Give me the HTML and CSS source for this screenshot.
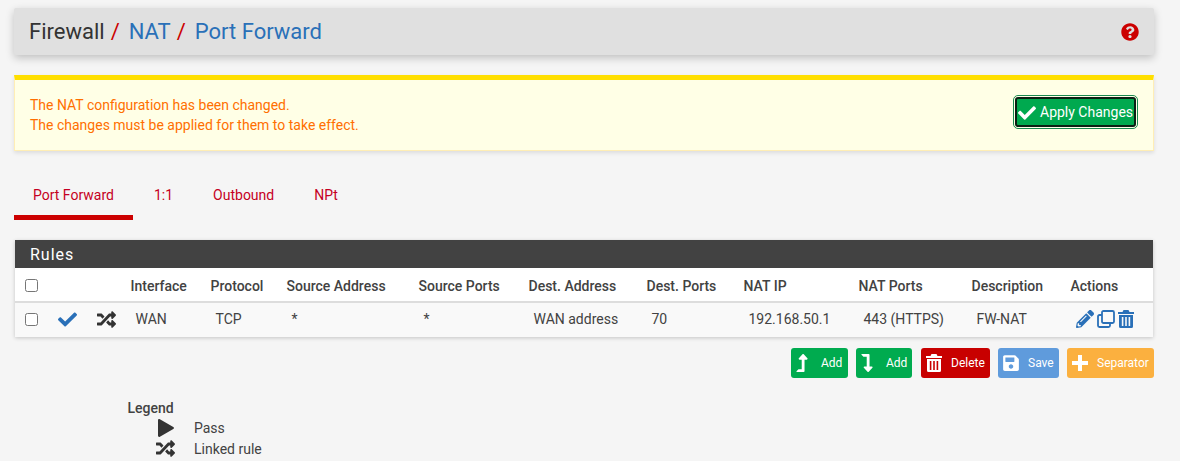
FILE: index.html
```html
<!DOCTYPE html>
<html lang="en">
<head>
<meta charset="utf-8">
<title>Firewall / NAT / Port Forward</title>
<link rel="stylesheet" href="styles.css">
</head>
<body>
<svg class="defs" width="0" height="0" aria-hidden="true">
  <symbol id="i-random" viewBox="0 0 512 512"><path d="M504.971 359.029c9.373 9.373 9.373 24.569 0 33.941l-80 79.984c-15.01 15.01-40.971 4.49-40.971-16.971V416h-58.785a12.004 12.004 0 0 1-8.773-3.812l-70.556-75.596 53.333-57.143L352 336h32v-39.981c0-21.438 25.943-31.998 40.971-16.971l80 79.981zM12 176h84l52.781 56.551 53.333-57.143-70.556-75.596A11.999 11.999 0 0 0 122.785 96H12c-6.627 0-12 5.373-12 12v56c0 6.627 5.373 12 12 12zm372 0v39.984c0 21.46 25.961 31.98 40.971 16.971l80-79.984c9.373-9.373 9.373-24.569 0-33.941l-80-79.981C409.943 24.021 384 34.582 384 56.019V96h-58.785a12.004 12.004 0 0 0-8.773 3.812L96 336H12c-6.627 0-12 5.373-12 12v56c0 6.627 5.373 12 12 12h110.785c3.326 0 6.503-1.381 8.773-3.812L352 176h32z"/></symbol>
  <symbol id="i-check" viewBox="0 0 512 512"><path d="M173.898 439.404l-166.4-166.4c-9.997-9.997-9.997-26.206 0-36.204l36.203-36.204c9.997-9.998 26.207-9.998 36.204 0L192 312.69 432.095 72.596c9.997-9.997 26.207-9.997 36.204 0l36.203 36.204c9.997 9.997 9.997 26.206 0 36.204l-294.4 294.401c-9.998 9.997-26.207 9.997-36.204-.001z"/></symbol>
  <symbol id="i-trash" viewBox="0 0 16 18"><path fill-rule="evenodd" d="M5.5 0h5l1 2H16v2H0V2h4.500zM1 5h14v11.500a1.500 1.500 0 0 1-1.500 1.500h-11A1.500 1.500 0 0 1 1 16.500zM3.800 7v9h1.600V7zm3.400 0v9h1.600V7zm3.400 0v9h1.600V7z"/></symbol>
</svg>
<div class="page">
  <header class="page-header">
    <h2 class="crumbs">
      <span>Firewall</span><i class="sep">/</i>
      <a href="#">NAT</a><i class="sep">/</i>
      <a href="#">Port Forward</a>
    </h2>
    <svg class="help" viewBox="0 0 512 512"><path d="M504 256c0 136.997-111.043 248-248 248S8 392.997 8 256C8 119.083 119.043 8 256 8s248 111.083 248 248zM262.655 90c-54.497 0-89.255 22.957-116.549 63.758-3.536 5.286-2.353 12.415 2.715 16.258l34.699 26.31c5.205 3.947 12.621 3.008 16.665-2.122 17.864-22.658 30.113-35.797 57.303-35.797 20.429 0 45.698 13.148 45.698 32.958 0 14.976-12.363 22.667-32.534 33.976C247.128 238.528 216 254.941 216 296v4c0 6.627 5.373 12 12 12h56c6.627 0 12-5.373 12-12v-1.333c0-28.462 83.186-29.647 83.186-106.667 0-58.002-60.165-102-116.531-102zM256 338c-25.365 0-46 20.635-46 46 0 25.364 20.635 46 46 46s46-20.636 46-46c0-25.365-20.635-46-46-46z"/></svg>
  </header>

  <section class="alert">
    <p class="alert-text">The NAT configuration has been changed.<br>The changes must be applied for them to take effect.</p>
    <button class="apply"><svg class="apply-icon"><use href="#i-check"/></svg>Apply Changes</button>
  </section>

  <nav class="tabs">
    <a class="tab active" href="#">Port Forward</a>
    <a class="tab" href="#">1:1</a>
    <a class="tab" href="#">Outbound</a>
    <a class="tab" href="#">NPt</a>
  </nav>

  <section class="panel">
    <h3 class="panel-title">Rules</h3>
    <div class="row head">
      <span class="cell"><span class="box"></span></span>
      <span></span><span></span>
      <span>Interface</span><span>Protocol</span><span>Source Address</span><span>Source Ports</span>
      <span>Dest. Address</span><span>Dest. Ports</span><span>NAT IP</span><span>NAT Ports</span>
      <span>Description</span><span>Actions</span>
    </div>
    <div class="row body">
      <span class="cell"><span class="box"></span></span>
      <span class="cell"><svg class="ico-check"><use href="#i-check"/></svg></span>
      <span class="cell"><svg class="ico-random"><use href="#i-random"/></svg></span>
      <span class="td">WAN</span><span class="td">TCP</span><span class="td">*</span><span class="td">*</span>
      <span class="td">WAN address</span><span class="td">70</span><span class="td">192.168.50.1</span><span class="td">443 (HTTPS)</span>
      <span class="td">FW-NAT</span>
      <span class="actions">
        <svg class="act pencil" viewBox="0 0 512 512"><path d="M497.9 142.1l-46.1 46.1c-4.7 4.700-12.300 4.700-17 0l-111-111c-4.700-4.700-4.700-12.300 0-17l46.100-46.100c18.700-18.700 49.100-18.700 67.900 0l60.100 60.100c18.800 18.700 18.800 49.100 0 67.900zM284.200 99.800L21.600 362.400.4 483.900c-2.900 16.400 11.400 30.600 27.800 27.800l121.500-21.300 262.600-262.600c4.700-4.700 4.700-12.300 0-17l-111-111c-4.800-4.700-12.400-4.700-17.100 0zM124.100 339.900c-5.500-5.500-5.500-14.300 0-19.800l154-154c5.500-5.500 14.300-5.500 19.800 0s5.500 14.300 0 19.800l-154 154c-5.500 5.500-14.300 5.500-19.800 0zM88 424h48v36.300l-64.500 11.300-31.100-31.100L51.700 376H88v48z"/></svg>
        <svg class="act clone" viewBox="0 0 18 18"><rect x="5" y="1" width="12" height="12" rx="1.500"/><path d="M5 5H2.500A1.500 1.500 0 0 0 1 6.500v9A1.500 1.500 0 0 0 2.500 17h9a1.500 1.500 0 0 0 1.500-1.500V13"/></svg>
        <svg class="act trash"><use href="#i-trash"/></svg>
      </span>
    </div>
  </section>

  <div class="toolbar">
    <button class="btn green"><svg class="b-ico lvl" viewBox="0 0 320 512"><path d="M313.553 119.669L209.587 7.666c-9.485-10.214-25.676-10.229-35.174 0L70.438 119.669C56.232 134.969 67.062 160 88.025 160H152v272H68.024a11.996 11.996 0 0 0-8.485 3.515l-56 56C-4.021 499.074 1.333 512 12.024 512H208c13.255 0 24-10.745 24-24V160h64c20.878 0 31.851-24.969 17.552-40.331z"/></svg>Add</button>
    <button class="btn green"><svg class="b-ico lvl" viewBox="0 0 320 512"><path d="M313.553 392.331L209.587 504.334c-9.485 10.214-25.676 10.229-35.174 0L70.438 392.331C56.232 377.031 67.062 352 88.025 352H152V80H68.024a11.996 11.996 0 0 1-8.485-3.515l-56-56C-4.021 12.926 1.333 0 12.024 0H208c13.255 0 24 10.745 24 24v328h64c20.878 0 31.851 24.969 17.552 40.331z"/></svg>Add</button>
    <button class="btn red"><svg class="b-ico trash-w"><use href="#i-trash"/></svg>Delete</button>
    <button class="btn blue"><svg class="b-ico floppy" viewBox="0 0 448 512"><path d="M433.941 129.941l-83.882-83.882A48 48 0 0 0 316.118 32H48C21.490 32 0 53.490 0 80v352c0 26.510 21.490 48 48 48h352c26.510 0 48-21.490 48-48V163.882a48 48 0 0 0-14.059-33.941zM224 416c-35.346 0-64-28.654-64-64 0-35.346 28.654-64 64-64s64 28.654 64 64c0 35.346-28.654 64-64 64zm96-304.520V212c0 6.627-5.373 12-12 12H76c-6.627 0-12-5.373-12-12V108c0-6.627 5.373-12 12-12h228.520c3.183 0 6.235 1.264 8.485 3.515l3.480 3.480A11.996 11.996 0 0 1 320 111.480z"/></svg>Save</button>
    <button class="btn orange"><svg class="b-ico plus" viewBox="0 0 16 16"><path d="M6 0h4v6h6v4h-6v6H6v-6H0V6h6z"/></svg>Separator</button>
  </div>

  <section class="legend">
    <strong class="legend-title">Legend</strong>
    <div class="legend-row">
      <span class="legend-icon play-cell"><svg class="play" viewBox="0 0 16 18"><path d="M0 1.200C0 .2 1 -.3 1.900 .2L15.300 8c.9.5.9 1.500 0 2L1.900 17.800C1 18.300 0 17.800 0 16.800z"/></svg></span>
      <span>Pass</span>
    </div>
    <div class="legend-row">
      <span class="legend-icon"><svg class="ico-random"><use href="#i-random"/></svg></span>
      <span>Linked rule</span>
    </div>
  </section>
</div>
</body>
</html>
```
FILE: styles.css
```css
* { box-sizing: border-box; }
html, body { margin: 0; padding: 0; height: 461px; overflow: hidden; }
body {
  background: #f5f5f5;
  font-family: Roboto, "Liberation Sans", sans-serif;
  font-size: 14px;
  line-height: 20px;
  color: #424242;
}
.defs { display: block; height: 0; }
.page { padding: 8px 26px 0 14px; }

.page-header {
  height: 47px;
  background: #e0e0e0;
  border-radius: 2px;
  box-shadow: 0 3px 8px rgba(0, 0, 0, .22);
  display: flex;
  align-items: center;
  justify-content: space-between;
  padding: 0 16px 0 15px;
}
.crumbs { margin: 0; font-size: 22px; font-weight: 400; line-height: 32px; color: #333; display: flex; }
.crumbs a { color: #2a70b8; text-decoration: none; }
.sep { color: #c00; font-style: normal; margin: 0 9px 0 6px; }
.help { width: 18px; height: 18px; fill: #c00; margin-right: -1px; }

.alert {
  margin-top: 20px;
  height: 76px;
  background: #ffffe6;
  border: 1px solid #ffeeb5;
  border-top: 5px solid #ffdf00;
  box-shadow: 0 2px 4px rgba(0, 0, 0, .1);
  display: flex;
  align-items: center;
  justify-content: space-between;
  padding: 0 17px 0 15px;
}
.alert-text { margin: 0; color: #ff6f00; }
.apply {
  height: 30px;
  width: 121px;
  margin-bottom: 6px;
  padding: 0 0 0 1px;
  border: 2px solid #0b1f14;
  border-radius: 3px;
  background: #00a94f;
  outline: 1px solid #1a8a50;
  outline-offset: 1px;
  color: #fff;
  font: 14px/20px Roboto, sans-serif;
  display: flex;
  align-items: center;
  white-space: nowrap;
}
.apply-icon { width: 18px; height: 18px; fill: #fff; margin-right: 4px; margin-top: 2px; }

.tabs { display: flex; margin-top: 24px; height: 45px; }
.tab {
  padding: 10px 19px 0;
  color: #c50022;
  text-decoration: none;
  border-bottom: 5px solid transparent;
  margin-right: 2px;
}
.tab.active { border-bottom-color: #c00; margin-right: 2px; }

.panel {
  margin: 20px 1px 0;
  background: #fff;
  box-shadow: 0 1px 4px rgba(0, 0, 0, .2);
}
.panel-title {
  margin: 0;
  height: 28px;
  background: #424242;
  color: #fff;
  font-size: 16px;
  font-weight: 400;
  line-height: 29px;
  letter-spacing: 1px;
  padding-left: 15px;
}
.row {
  display: grid;
  grid-template-columns: 34px 37px 44.500px 80px 76px 132px 110px 118px 97px 115px 113px 99px 1fr;
  align-items: center;
  white-space: nowrap;
}
.head { height: 35px; font-weight: 500; border-bottom: 2px solid #ddd; padding-top: 2px; }
.body { height: 34px; background: #f9f9f9; padding-bottom: 2px; }
.td { padding-left: 5px; }
.cell { display: flex; align-items: center; padding-left: 10px; }
.row > .cell:nth-child(2) { padding-left: 9px; }
.row > .cell:nth-child(3) { padding-left: 11px; }
.box {
  width: 13px; height: 13px;
  border: 1px solid #767676;
  border-radius: 2.500px;
  background: #fff;
}
.ico-check { width: 19px; height: 19px; fill: #2a70b8; }
.ico-random { width: 19px; height: 19px; fill: #333; }
.actions { display: flex; align-items: center; gap: 3px; padding-left: 5.500px; }
.act { width: 18px; height: 18px; display: block; }
.pencil { fill: #2a70b8; }
.clone { fill: none; stroke: #2a70b8; stroke-width: 1.800; }
.trash { width: 16px; fill: #2a70b8; }

.toolbar { display: flex; justify-content: flex-end; gap: 8px; margin-top: 11px; }
.btn {
  height: 30px;
  border: 0;
  border-radius: 3px;
  color: #fff;
  font: 12px/18px Roboto, sans-serif;
  display: flex;
  align-items: center;
  padding: 0 5px;
  white-space: nowrap;
}
.green { background: #00ab4f; }
.red { background: #c80000; margin-left: 1px; }
.blue { background: #5f9bdc; }
.orange { background: #fbb03f; }
.btn:nth-child(1) { width: 57px; }
.btn:nth-child(2) { width: 56px; }
.btn:nth-child(3) { width: 69px; }
.btn:nth-child(4) { width: 61px; }
.btn:nth-child(5) { width: 87px; }
.b-ico { fill: #fff; height: 18px; flex: none; }
.lvl { width: 12px; margin-right: 13px; }
.trash-w { width: 16px; margin-right: 9px; }
.floppy { width: 16px; margin-right: 9px; }
.plus { width: 16px; height: 16px; margin-right: 9px; }

.legend { margin: 21px 0 0 113.500px; }
.legend-title { display: block; font-weight: 500; line-height: 18px; }
.legend-row { display: flex; align-items: center; height: 21px; }
.legend-icon { width: 66.500px; display: flex; justify-content: flex-start; padding-left: 28.500px; }
.play-cell { padding-left: 29.500px; }
.play { width: 17px; height: 18px; fill: #333; padding-left: 1px; }
```
